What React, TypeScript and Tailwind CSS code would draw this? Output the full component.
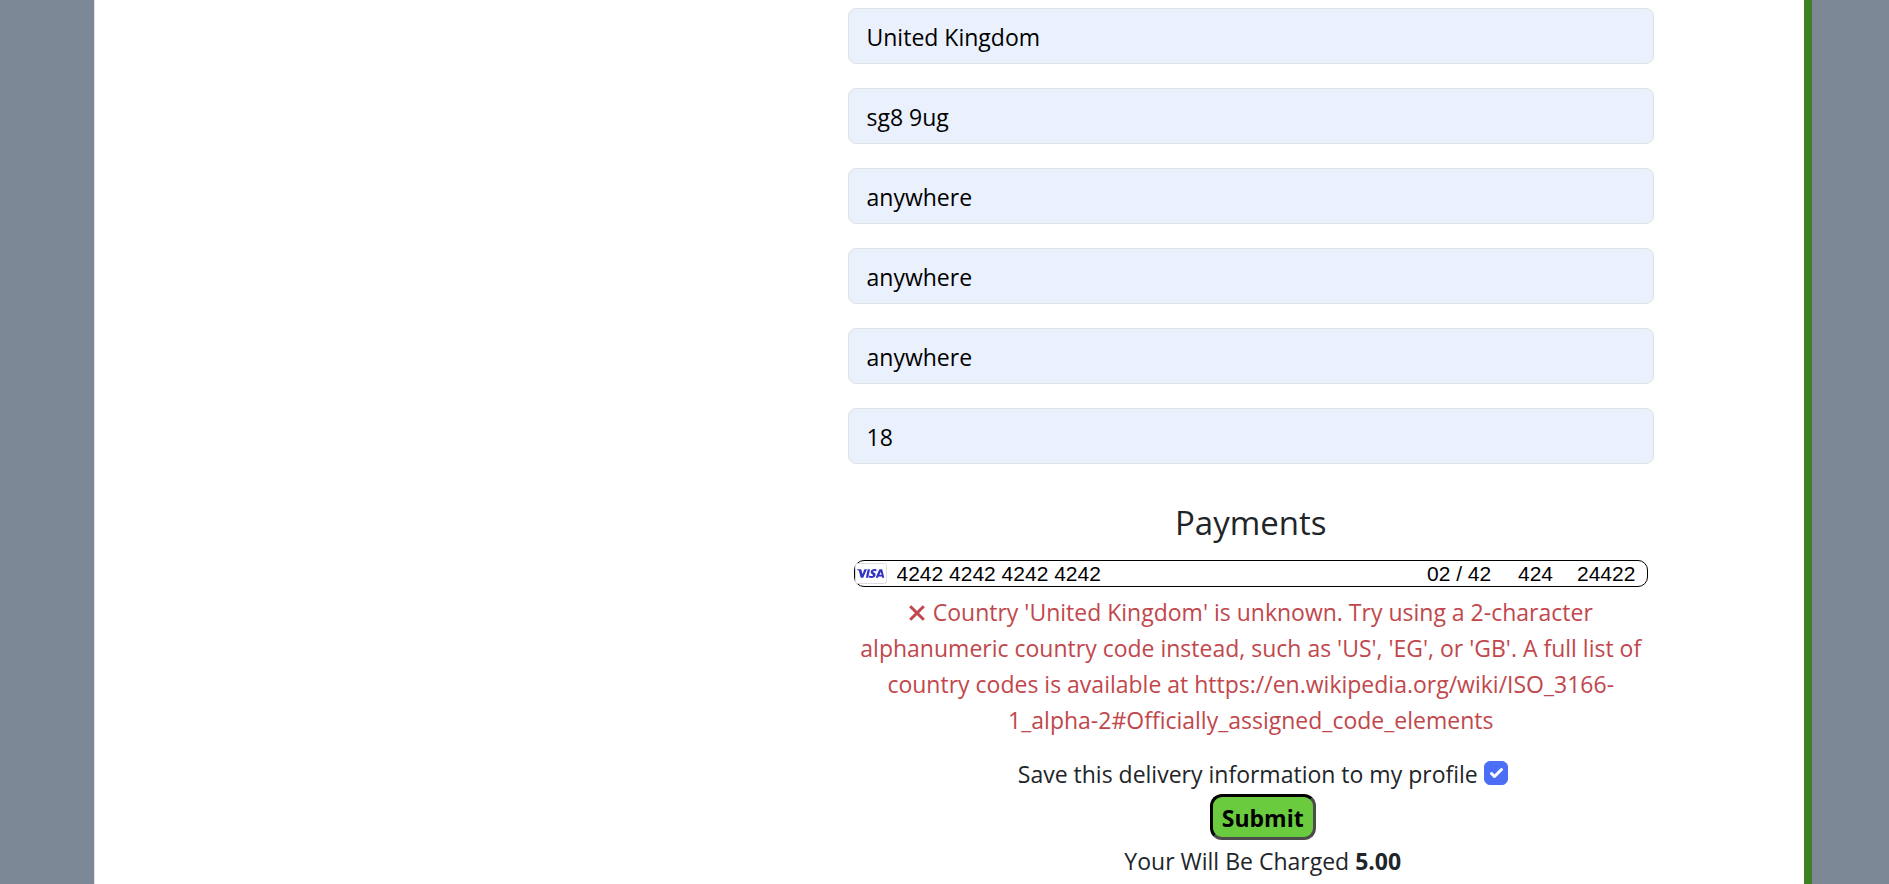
const addressFields = [
  { id: "country", label: "Country", value: "United Kingdom" },
  { id: "postcode", label: "Postal code", value: "sg8 9ug" },
  { id: "town", label: "Town or city", value: "anywhere" },
  { id: "street1", label: "Street address 1", value: "anywhere" },
  { id: "street2", label: "Street address 2", value: "anywhere" },
  { id: "county", label: "County", value: "18" },
];

function VisaIcon() {
  return (
    <svg width="32" height="21" viewBox="0 0 32 21" aria-hidden="true" className="shrink-0">
      <rect x="0.5" y="0.5" width="31" height="20" rx="2" fill="#fff" stroke="#dddddf" />
      <g transform="translate(2 6)" fill="#3334c4">
        <path d="M0 .2 3.1.2Q4.3.2 4.6 1.2L5.4 5.2 7.4.2 9.9.2 6.2 8.8 3.7 8.8 2 2.2Q1.6 1.1 0 .8Z" />
        <path d="M10.7.2 13 .2 11.2 8.8 8.9 8.8Z" />
        <path d="M19.6.4 19.2 2.4C17.6 1.7 16 1.8 16 2.6 16 3.5 18.8 3.8 18.6 6 18.4 8.9 14.4 9.5 11.8 8.5L12.2 6.5C14 7.4 16.1 7.3 16.1 6.3 16.1 5.4 13.5 5 13.6 3 13.8.2 17.3-.5 19.6.4Z" />
        <path d="M23 .2 25.2.2 27.3 8.8 25.1 8.8 24.8 7.5 21.6 7.5 21 8.8 18.6 8.8 22 1Q22.3.2 23 .2ZM23.8 2.9 22.4 5.8 24.5 5.8Z" />
      </g>
    </svg>
  );
}

export default function App() {
  return (
    <div className="min-h-screen bg-[#7d8896] pr-[77px] pl-[94px] font-['Open_Sans',sans-serif] text-[23px] leading-9 text-[#212529]">
      <main className="flex min-h-screen border-r-8 border-l border-r-[#3f8024] border-l-[#dee2e6] bg-white">
        <form className="mr-[126px] ml-auto w-1/2 px-6 pt-2" onSubmit={(e) => e.preventDefault()}>
          <div className="flex flex-col gap-6">
            {addressFields.map((field) => (
              <input
                key={field.id}
                id={field.id}
                aria-label={field.label}
                defaultValue={field.value}
                className="h-14 w-full rounded-lg border border-[#dee2e6] bg-[#eaf0fc] px-[18px] pt-0.5 text-black"
              />
            ))}
          </div>
          <h2 className="mt-[35px] text-center text-[33px] leading-12">Payments</h2>
          <div className="mx-1.5 mt-[13px] flex h-[27px] items-center rounded-[10px] border border-black pr-2.5 font-['Liberation_Sans',sans-serif] text-[21px] leading-6 text-black">
            <VisaIcon />
            <input aria-label="Card number" defaultValue="4242 4242 4242 4242" className="ml-2.5 h-6 min-w-0 flex-1" />
            <input aria-label="Expiry date" defaultValue="02 / 42" className="h-6 w-[91px]" />
            <input aria-label="CVC" defaultValue="424" className="h-6 w-[59px]" />
            <input aria-label="Postal code for card" defaultValue="24422" className="h-6 w-[60px]" />
          </div>
          <p role="alert" className="mx-1.5 mt-[7px] text-center text-[#c1474c]">
            <svg width="16" height="16" viewBox="0 0 16 16" aria-hidden="true" className="mr-2 inline-block align-baseline">
              <path d="M1.2 1.2 14.8 14.8M14.8 1.2 1.2 14.8" stroke="currentColor" strokeWidth="3" />
            </svg>
            Country 'United Kingdom' is unknown. Try using a 2-character alphanumeric country code instead, such as
            'US', 'EG', or 'GB'. A full list of country codes is available at
            https://en.wikipedia.org/wiki/ISO_3166-1_alpha-2#Officially_assigned_code_elements
          </p>
          <div className="mt-[18px] flex flex-col items-center pl-6">
            <div className="flex items-start gap-1.5">
              <label htmlFor="save-info">Save this delivery information to my profile</label>
              <span className="mt-[5px] grid">
                <input
                  id="save-info"
                  type="checkbox"
                  defaultChecked
                  className="peer col-start-1 row-start-1 size-6 appearance-none rounded-md border border-[#4c6ef5] bg-white checked:bg-[#4c6ef5]"
                />
                <svg width="24" height="24" viewBox="0 0 24 24" fill="none" aria-hidden="true" className="pointer-events-none invisible col-start-1 row-start-1 peer-checked:visible">
                  <path d="M7.5 12.5 10.5 15.5 17.5 8.5" stroke="#fff" strokeWidth="3" strokeLinecap="round" strokeLinejoin="round" />
                </svg>
              </span>
            </div>
            <button
              type="submit"
              className="mt-0.5 h-[46px] rounded-xl border-3 border-t-black border-r-[#4c4c4c] border-b-[#4c4c4c] border-l-black bg-[#6bcb3f] px-[9px] pt-0.5 font-bold text-black"
            >
              Submit
            </button>
            <p className="mt-[3px]">
              Your Will Be Charged <strong className="font-bold">5.00</strong>
            </p>
          </div>
        </form>
      </main>
    </div>
  );
}
